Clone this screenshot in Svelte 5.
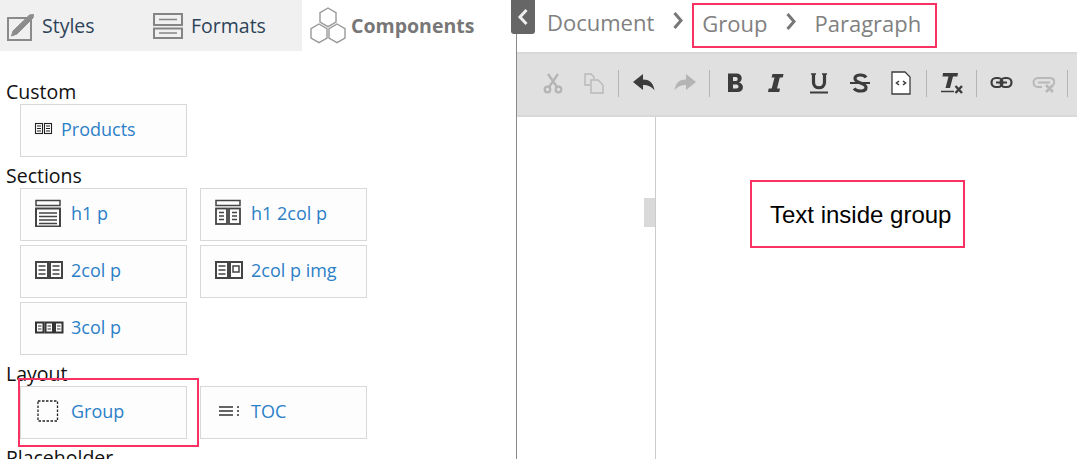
<script>
  const tools = [
    ["cut", "copy"],
    ["undo", "redo"],
    ["bold", "italic", "underline", "strike", "source"],
    ["clear"],
    ["link", "unlink"],
  ];
</script>

{#snippet cardIcon(name)}
  {#if name === "products"}
    <svg width="20" height="14" viewBox="0 0 20 14" fill="none" stroke="#222" stroke-width="1.100">
      <rect x="1.500" y="1.500" width="7" height="10" /><rect x="10.500" y="1.500" width="7" height="10" />
      <path d="M3 4h4M3 6.500h4M3 9h4M12 4h4M12 6.500h4M12 9h4" />
    </svg>
  {:else if name === "h1p"}
    <svg width="28" height="28" viewBox="0 0 28 28" fill="none" stroke="#444" stroke-width="1.500">
      <rect x="2" y="1.500" width="24" height="5" />
      <rect x="2" y="9.500" width="24" height="18" stroke-width="2" />
      <path d="M5 14h18M5 17.500h18M5 21h18M5 24.500h18" />
    </svg>
  {:else if name === "h12col"}
    <svg width="28" height="28" viewBox="0 0 28 28" fill="none" stroke="#444" stroke-width="1.800">
      <rect x="2" y="1.500" width="24" height="5" stroke-width="1.500" />
      <rect x="2" y="9.500" width="11" height="15.500" /><rect x="15" y="9.500" width="11" height="15.500" />
      <path d="M5 13.500h5M5 17h5M5 20.500h5M18 13.500h5M18 17h5M18 20.500h5" stroke-width="1.400" />
    </svg>
  {:else if name === "2col"}
    <svg width="30" height="20" viewBox="0 0 30 20" fill="none" stroke="#444" stroke-width="2">
      <rect x="2" y="2" width="12" height="16" /><rect x="16" y="2" width="12" height="16" />
      <path d="M4.500 6h7M4.500 10h7M4.500 14h7M18.500 6h7M18.500 10h7M18.500 14h7" stroke-width="1.400" />
    </svg>
  {:else if name === "2colimg"}
    <svg width="30" height="20" viewBox="0 0 30 20" fill="none" stroke="#444" stroke-width="2">
      <rect x="2" y="2" width="12" height="16" /><rect x="16" y="2" width="12" height="16" />
      <path d="M4.500 6h7M4.500 10h7M4.500 14h7" stroke-width="1.400" />
      <rect x="19" y="6" width="6" height="6" stroke-width="1.500" />
    </svg>
  {:else if name === "3col"}
    <svg width="30" height="14" viewBox="0 0 30 14" fill="none" stroke="#333" stroke-width="2">
      <rect x="2" y="2.500" width="7.500" height="10" /><rect x="11.500" y="2.500" width="7.500" height="10" /><rect x="21" y="2.500" width="7.500" height="10" />
      <path d="M4 6h3.500M4 9h3.500M13.500 6H17M13.500 9H17M23 6h3.500M23 9h3.500" stroke-width="1.100" />
    </svg>
  {:else if name === "group"}
    <svg width="30" height="24" viewBox="0 0 30 24" fill="none">
      <rect x="4" y="2" width="19.500" height="20" stroke="#222" stroke-width="1.300" stroke-dasharray="2.500 1.500" />
    </svg>
  {:else if name === "toc"}
    <svg width="30" height="12" viewBox="0 0 30 12" fill="none" stroke="#333" stroke-width="1.500">
      <path d="M5 2h14M5 6h14M5 10h14" /><path d="M23 2h2M23 6h2M23 10h2" stroke-width="1.700" />
    </svg>
  {/if}
{/snippet}

{#snippet card(icon, label)}
  <a class="card" href="#{label}">
    <span class="card-icon" class:small={icon === "products"}>{@render cardIcon(icon)}</span>
    <span>{label}</span>
  </a>
{/snippet}

{#snippet toolIcon(name)}
  <svg width="24" height="24" viewBox="0 0 24 24" fill="none">
    {#if name === "cut"}
      <g stroke="#b4b4b4" stroke-width="2.200">
        <path d="M7 3l9 13M17 3L8 16" />
        <circle cx="6.500" cy="18.500" r="2.800" /><circle cx="17.500" cy="18.500" r="2.800" />
      </g>
    {:else if name === "copy"}
      <g stroke="#b8b8b8" stroke-width="1.400">
        <path d="M8 14H3V3h6l3 3v2" />
        <path d="M9 9h7l5 5v8H9z" />
      </g>
    {:else if name === "undo"}
      <path d="M1 11l10-8v5.500c6 0 10.500 3 11.500 11-3-4-6.500-5.500-11.500-5.500v5z" fill="#3c3c3c" />
    {:else if name === "redo"}
      <path d="M23 11L13 3v5.500C7 8.500 2.500 11.500 1.500 19.500c3-4 6.500-5.500 11.500-5.500v5z" fill="#b4b4b4" />
    {:else if name === "bold"}
      <path d="M5 2.500h8.500c6.500 0 6.500 7.500 2.500 9 5.500 1 5.500 9.500-1.500 9.500H5zM10 6v4h3c2.300 0 2.300-4 0-4zM10 13.500V17.500h3.500c2.700 0 2.700-4 0-4z" fill="#3c3c3c" fill-rule="evenodd" />
    {:else if name === "italic"}
      <path d="M8.500 3h11l-.7 3.500h-3L13 17.500h3L15.300 21H4l.7-3.500h3L10.500 6.500h-3z" fill="#3c3c3c" />
    {:else if name === "underline"}
      <path d="M6.500 3v8.500c0 7 11 7 11 0V3" stroke="#3c3c3c" stroke-width="3.200" />
      <path d="M4 3h5M15 3h5" stroke="#3c3c3c" stroke-width="1.600" />
      <path d="M3 21.500h18" stroke="#3c3c3c" stroke-width="2" />
    {:else if name === "strike"}
      <path d="M18 6.500c-2-3.500-11-3.500-11 1 0 5 11 4 11 9 0 4.500-9 4.500-12 1" stroke="#3c3c3c" stroke-width="3.200" />
      <path d="M2 12h20" stroke="#3c3c3c" stroke-width="2" />
    {:else if name === "source"}
      <path d="M3 1h13l5 5v17H3z" fill="#fff" stroke="#3c3c3c" stroke-width="1.300" />
      <path d="M10 10l-2.500 2 2.500 2M14 10l2.500 2-2.500 2" stroke="#3c3c3c" stroke-width="1.600" />
    {:else if name === "clear"}
      <path d="M3 2h15l-.6 3.500h-4.400L10 17H5.500L8.500 5.500H2.500z" fill="#3c3c3c" />
      <path d="M1 20.500h13" stroke="#3c3c3c" stroke-width="1.500" />
      <path d="M15.500 15l6.500 7M22 15l-6.500 7" stroke="#3c3c3c" stroke-width="2.400" />
    {:else if name === "link"}
      <rect x="1.500" y="7" width="11" height="9" rx="4.500" stroke="#3c3c3c" stroke-width="2.200" />
      <rect x="10.500" y="7" width="11" height="9" rx="4.500" stroke="#3c3c3c" stroke-width="2.200" />
      <path d="M6 11.500h11" stroke="#3c3c3c" stroke-width="2" />
    {:else if name === "unlink"}
      <path d="M11 16H7c-6 0-6-9 0-9h12c5 0 5 5 3 7M7 11.500h12" stroke="#b8b8b8" stroke-width="2" />
      <path d="M15 14l7 7M22 14l-7 7" stroke="#b8b8b8" stroke-width="2.600" />
    {/if}
  </svg>
{/snippet}

{#snippet chevron()}
  <svg class="sep" width="12" height="19" viewBox="0 0 12 19" fill="none"><path d="M2.500 2l6.500 7.500-6.500 7.500" stroke="#777" stroke-width="3" /></svg>
{/snippet}

<div class="page">
  <aside class="panel">
    <nav class="tabs">
      <div class="tab styles">
        <svg width="32" height="32" viewBox="0 0 32 32" fill="none">
          <path d="M26 7V30H3V8h20" stroke="#8a8a8a" stroke-width="2" transform="translate(1 0)" />
          <path d="M9 29l1.500-5L27 8l4-.5-.5 3.500-16 16z" fill="#8c8c8c" stroke="#8c8c8c" stroke-width="1" transform="translate(-1.500 -3)" />
        </svg>
        <span>Styles</span>
      </div>
      <div class="tab formats">
        <svg width="32" height="28" viewBox="0 0 32 28" fill="none" stroke="#858585">
          <rect x="2" y="2" width="28" height="11" stroke-width="2" />
          <rect x="2" y="16.500" width="28" height="9.500" stroke-width="2" />
          <path d="M7 7.500h18M7 21h18" stroke-width="1.500" />
        </svg>
        <span>Formats</span>
      </div>
      <div class="tab components">
        <svg width="36" height="38" viewBox="0 0 36 38" fill="none" stroke="#999" stroke-width="1.400">
          <path d="M18 1l8 4.700v9.300l-8 4.700-8-4.700V5.700z" />
          <path d="M9 17l8 4.700V31l-8 4.700L1 31v-9.300z" />
          <path d="M27 17l8 4.700V31l-8 4.700-8-4.700v-9.300z" />
        </svg>
        <span>Components</span>
      </div>
    </nav>

    <div class="groups">
      <h3>Custom</h3>
      <div class="cards">{@render card("products", "Products")}</div>
      <h3>Sections</h3>
      <div class="cards">
        {@render card("h1p", "h1 p")}
        {@render card("h12col", "h1 2col p")}
        {@render card("2col", "2col p")}
        {@render card("2colimg", "2col p img")}
        {@render card("3col", "3col p")}
      </div>
      <h3>Layout</h3>
      <div class="cards">
        <div class="marked">{@render card("group", "Group")}<i class="mark"></i></div>
        {@render card("toc", "TOC")}
      </div>
      <h3>Placeholder</h3>
    </div>
  </aside>

  <main class="editor">
    <header class="crumbs">
      <button class="back" aria-label="Collapse">
        <svg width="14" height="20" viewBox="0 0 14 20" fill="none">
          <path d="M10.500 3L4 10l6.500 7" stroke="#eee" stroke-width="3" />
        </svg>
      </button>
      <span class="crumb">Document</span>
      {@render chevron()}
      <div class="crumb-box">
        <span class="crumb">Group</span>
        {@render chevron()}
        <span class="crumb">Paragraph</span>
      </div>
    </header>

    <div class="toolbar">
      {#each tools as group, i}
        {#if i > 0}<span class="divider"></span>{/if}
        {#each group as name}
          <span class="tool {name}">{@render toolIcon(name)}</span>
        {/each}
      {/each}
      <span class="divider"></span>
    </div>

    <div class="content">
      <div class="gutter"><span class="handle"></span></div>
      <div class="page-body">
        <div class="text-box">Text inside group</div>
      </div>
    </div>
  </main>
</div>

<style>
  :global(body) {
    margin: 0;
    background: #fff;
  }
  .page {
    display: flex;
    width: 1077px;
    height: 459px;
    overflow: hidden;
    font-family: "Open Sans", sans-serif;
  }
  .panel {
    flex: 0 0 516px;
    border-right: 1px solid #8a8a8a;
  }
  .tabs {
    display: flex;
    height: 51px;
  }
  .tab {
    display: flex;
    align-items: center;
    font-size: 19.500px;
    color: #2d4358;
    background: #f0f0f0;
  }
  .tab.styles {
    width: 148px;
    padding-left: 4px;
    gap: 6px;
    box-sizing: border-box;
  }
  .tab.formats {
    width: 154px;
    padding-left: 4px;
    gap: 7px;
    box-sizing: border-box;
  }
  .tab.components {
    padding-left: 8px;
    gap: 5px;
    background: #fff;
    color: #777;
    font-weight: 700;
  }
  .groups {
    padding: 28px 0 0 6px;
  }
  h3 {
    margin: 0;
    height: 25px;
    font-size: 19.500px;
    line-height: 25px;
    font-weight: 400;
    color: #111;
  }
  .cards {
    display: flex;
    flex-wrap: wrap;
    gap: 4px 13px;
    width: 360px;
    margin: 0 0 6px 14px;
  }
  .card {
    display: flex;
    align-items: center;
    box-sizing: border-box;
    width: 167px;
    height: 53px;
    padding: 0 0 4px 13px;
    border: 1px solid #d8d8d8;
    background: #fdfdfd;
    font-size: 18px;
    color: #2b80c8;
    text-decoration: none;
  }
  .card-icon {
    display: flex;
    align-items: center;
    width: 37px;
  }
  .card-icon.small {
    width: 27px;
  }
  .marked {
    position: relative;
  }
  .mark {
    position: absolute;
    left: -2px;
    top: -8px;
    width: 181px;
    height: 69px;
    box-sizing: border-box;
    border: 2px solid #f93263;
  }
  .editor {
    position: relative;
    flex: 1;
    min-width: 0;
  }
  .crumbs {
    display: flex;
    align-items: center;
    height: 52px;
    padding: 0 0 9px 30px;
    box-sizing: border-box;
  }
  .back {
    position: absolute;
    left: -6px;
    top: 0;
    width: 24px;
    height: 34px;
    padding: 0;
    border: 0;
    border-radius: 0 0 3px 3px;
    background: #666;
    display: flex;
    align-items: center;
    justify-content: center;
  }
  .crumb {
    font-size: 22px;
    color: #808080;
  }
  .sep {
    margin: 0 17px 3px 18px;
  }
  .crumb-box {
    display: flex;
    align-items: center;
    align-self: flex-start;
    margin: 3px 0 0 -9px;
    height: 45px;
    width: 245px;
    padding: 0 0 6px 8px;
    box-sizing: border-box;
    border: 2px solid #f93263;
  }
  .toolbar {
    display: flex;
    align-items: center;
    box-sizing: border-box;
    height: 65px;
    padding: 0 0 3px 15px;
    background: #e0e0e0;
    border-top: 2px solid #d8d8d8;
    border-bottom: 2px solid #d8d8d8;
  }
  .tool {
    display: flex;
    justify-content: center;
    width: 41px;
  }
  .tool.italic {
    margin-right: 2px;
  }
  .tool.source {
    margin-right: 1px;
  }
  .divider {
    width: 1px;
    height: 27px;
    margin: 0 4px;
    background: #b4b4b4;
  }
  .content {
    display: flex;
    height: 343px;
  }
  .gutter {
    position: relative;
    width: 138px;
    border-right: 1px solid #ccc;
  }
  .handle {
    position: absolute;
    right: 0;
    top: 81px;
    width: 11px;
    height: 29px;
    background: #d9d9d9;
  }
  .page-body {
    flex: 1;
    padding: 63px 0 0 94px;
  }
  .text-box {
    width: 215px;
    height: 68px;
    padding: 2px 0 0 18px;
    box-sizing: border-box;
    border: 2px solid #f93263;
    display: flex;
    align-items: center;
    font-family: "Liberation Sans", Arial, sans-serif;
    font-size: 24px;
    color: #000;
  }
</style>
